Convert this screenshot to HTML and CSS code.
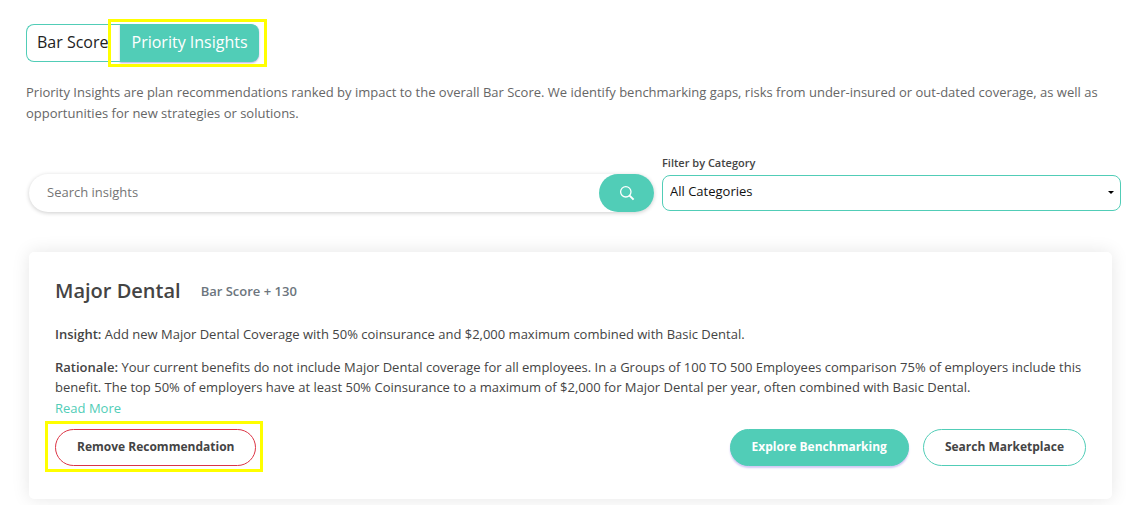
FILE: index.html
```html
<!DOCTYPE html>
<html lang="en">
<head>
<meta charset="utf-8">
<title>Priority Insights</title>
<link rel="stylesheet" href="styles.css">
</head>
<body>
<main class="page">
  <nav class="tabs" aria-label="Views">
    <button class="tab" type="button">Bar Score</button>
    <button class="tab tab-active marked" type="button">Priority Insights</button>
  </nav>
  <p class="intro">Priority Insights are plan recommendations ranked by impact to the overall Bar Score. We identify benchmarking gaps, risks from under-insured or out-dated coverage, as well as opportunities for new strategies or solutions.</p>
  <form class="filters">
    <div class="search">
      <input class="search-input" type="text" placeholder="Search insights" aria-label="Search insights">
      <button class="search-button" type="button" aria-label="Search">
        <svg class="search-icon" viewBox="0 0 16 16" aria-hidden="true"><circle cx="6.8" cy="6.8" r="5.2"/><path d="M10.6 10.6 14.6 14.6" stroke-width="2"/></svg>
      </button>
    </div>
    <div class="category">
      <label class="category-label" for="category">Filter by Category</label>
      <div class="select-wrap">
        <select class="select" id="category"><option>All Categories</option></select>
        <svg class="caret" viewBox="0 0 6 3" aria-hidden="true"><path d="M0 0h6L3 3z"/></svg>
      </div>
    </div>
  </form>
  <article class="card">
    <header class="card-head">
      <h2 class="card-title">Major Dental</h2>
      <span class="card-score">Bar Score + 130</span>
    </header>
    <p class="insight"><strong>Insight:</strong> Add new Major Dental Coverage with 50% coinsurance and $2,000 maximum combined with Basic Dental.</p>
    <p class="rationale"><strong>Rationale:</strong> Your current benefits do not include Major Dental coverage for all employees. In a Groups of 100 TO 500 Employees comparison 75% of employers include this benefit. The top 50% of employers have at least 50% Coinsurance to a maximum of $2,000 for Major Dental per year, often combined with Basic Dental.</p>
    <a class="more" href="#">Read More</a>
    <footer class="actions">
      <button class="pill pill-remove marked" type="button">Remove Recommendation</button>
      <div class="actions-right">
        <button class="pill pill-primary" type="button">Explore Benchmarking</button>
        <button class="pill" type="button">Search Marketplace</button>
      </div>
    </footer>
  </article>
</main>
</body>
</html>
```
FILE: styles.css
```css
* { box-sizing: border-box; }
body {
  margin: 0;
  background: #fff;
  color: #444;
  font: 13px/20px "Open Sans", "Noto Sans", sans-serif;
}
button, input, select { font: inherit; margin: 0; }
.page { padding: 24px 5px 6px 26px; overflow: hidden; }
.tabs { display: flex; }
.tab {
  height: 38px;
  padding: 0 11px 2px 10px;
  border: 1px solid #51cdb7;
  border-right: 0;
  border-radius: 8px 0 0 8px;
  background: #fff;
  color: #222;
  font-size: 16px;
}
.tab-active {
  padding: 0 11px 2px;
  border-radius: 0 8px 8px 0;
  background: #51cdb7;
  color: #fff;
  box-shadow: 0 1px 2px #b9aee0;
}
.marked { position: relative; }
.marked::after {
  content: "";
  position: absolute;
  inset: -6px -8px -6px -13px;
  border: 3px solid #ff0;
  pointer-events: none;
}
.intro { margin: 20px 15px 0 0; color: #666; line-height: 21px; }
.filters { display: flex; align-items: flex-end; gap: 8px; margin-top: 29px; }
.search {
  flex: 625;
  display: flex;
  height: 38px;
  margin: 0 0 -1px 3px;
  border-radius: 19px;
  box-shadow: 0 1px 4px rgba(0, 0, 0, .2);
}
.search-input {
  flex: 1;
  min-width: 0;
  padding: 0 18px 2px;
  border: 0;
  border-radius: 19px;
  background: transparent;
}
.search-input::placeholder { color: #757575; }
.search-button {
  display: flex;
  align-items: center;
  justify-content: center;
  width: 55px;
  border: 0;
  border-radius: 19px;
  background: #51cdb7;
}
.search-icon { width: 16px; fill: none; stroke: #fff; stroke-width: 1.3; }
.category { flex: 459; }
.category-label { display: block; margin-bottom: 3px; font-size: 11px; font-weight: 600; line-height: 19px; }
.select-wrap { position: relative; }
.select {
  display: block;
  width: 100%;
  height: 36px;
  padding: 0 7px 4px;
  appearance: none;
  border: 1px solid #51cdb7;
  border-radius: 8px;
  background: #fff;
  color: #111;
}
.caret { position: absolute; top: 16px; right: 7px; width: 6px; pointer-events: none; }
.card {
  margin: 41px 9px 0 3px;
  padding: 25px 26px 33px;
  border-radius: 5px;
  background: #fff;
  box-shadow: 0 0 18px rgba(0, 0, 0, .1);
}
.card-head { display: flex; align-items: center; gap: 20px; }
.card-title { margin: 0; font-size: 20px; line-height: 28px; font-weight: 600; }
.card-score { color: #6c757d; font-weight: 600; }
.insight, .rationale { margin: 19px 0 0; }
.rationale { margin-top: 13px; }
.insight strong, .rationale strong { font-weight: 600; }
.more { display: block; width: fit-content; margin-top: 1px; color: #51cdb7; text-decoration: none; }
.actions { display: flex; justify-content: space-between; margin-top: 11px; }
.actions-right { display: flex; gap: 14px; }
.pill {
  height: 37px;
  padding: 0 21px 2px;
  border: 1px solid #51cdb7;
  border-radius: 19px;
  background: #fff;
  color: #444;
  font-size: 12px;
  font-weight: 700;
}
.pill-primary { background: #51cdb7; color: #fff; box-shadow: 0 2px 2px #d3c8f5; }
.pill-remove { border-color: #dc3545; }
.pill-remove::after { inset: -9px -8px -7px -11px; }
```
